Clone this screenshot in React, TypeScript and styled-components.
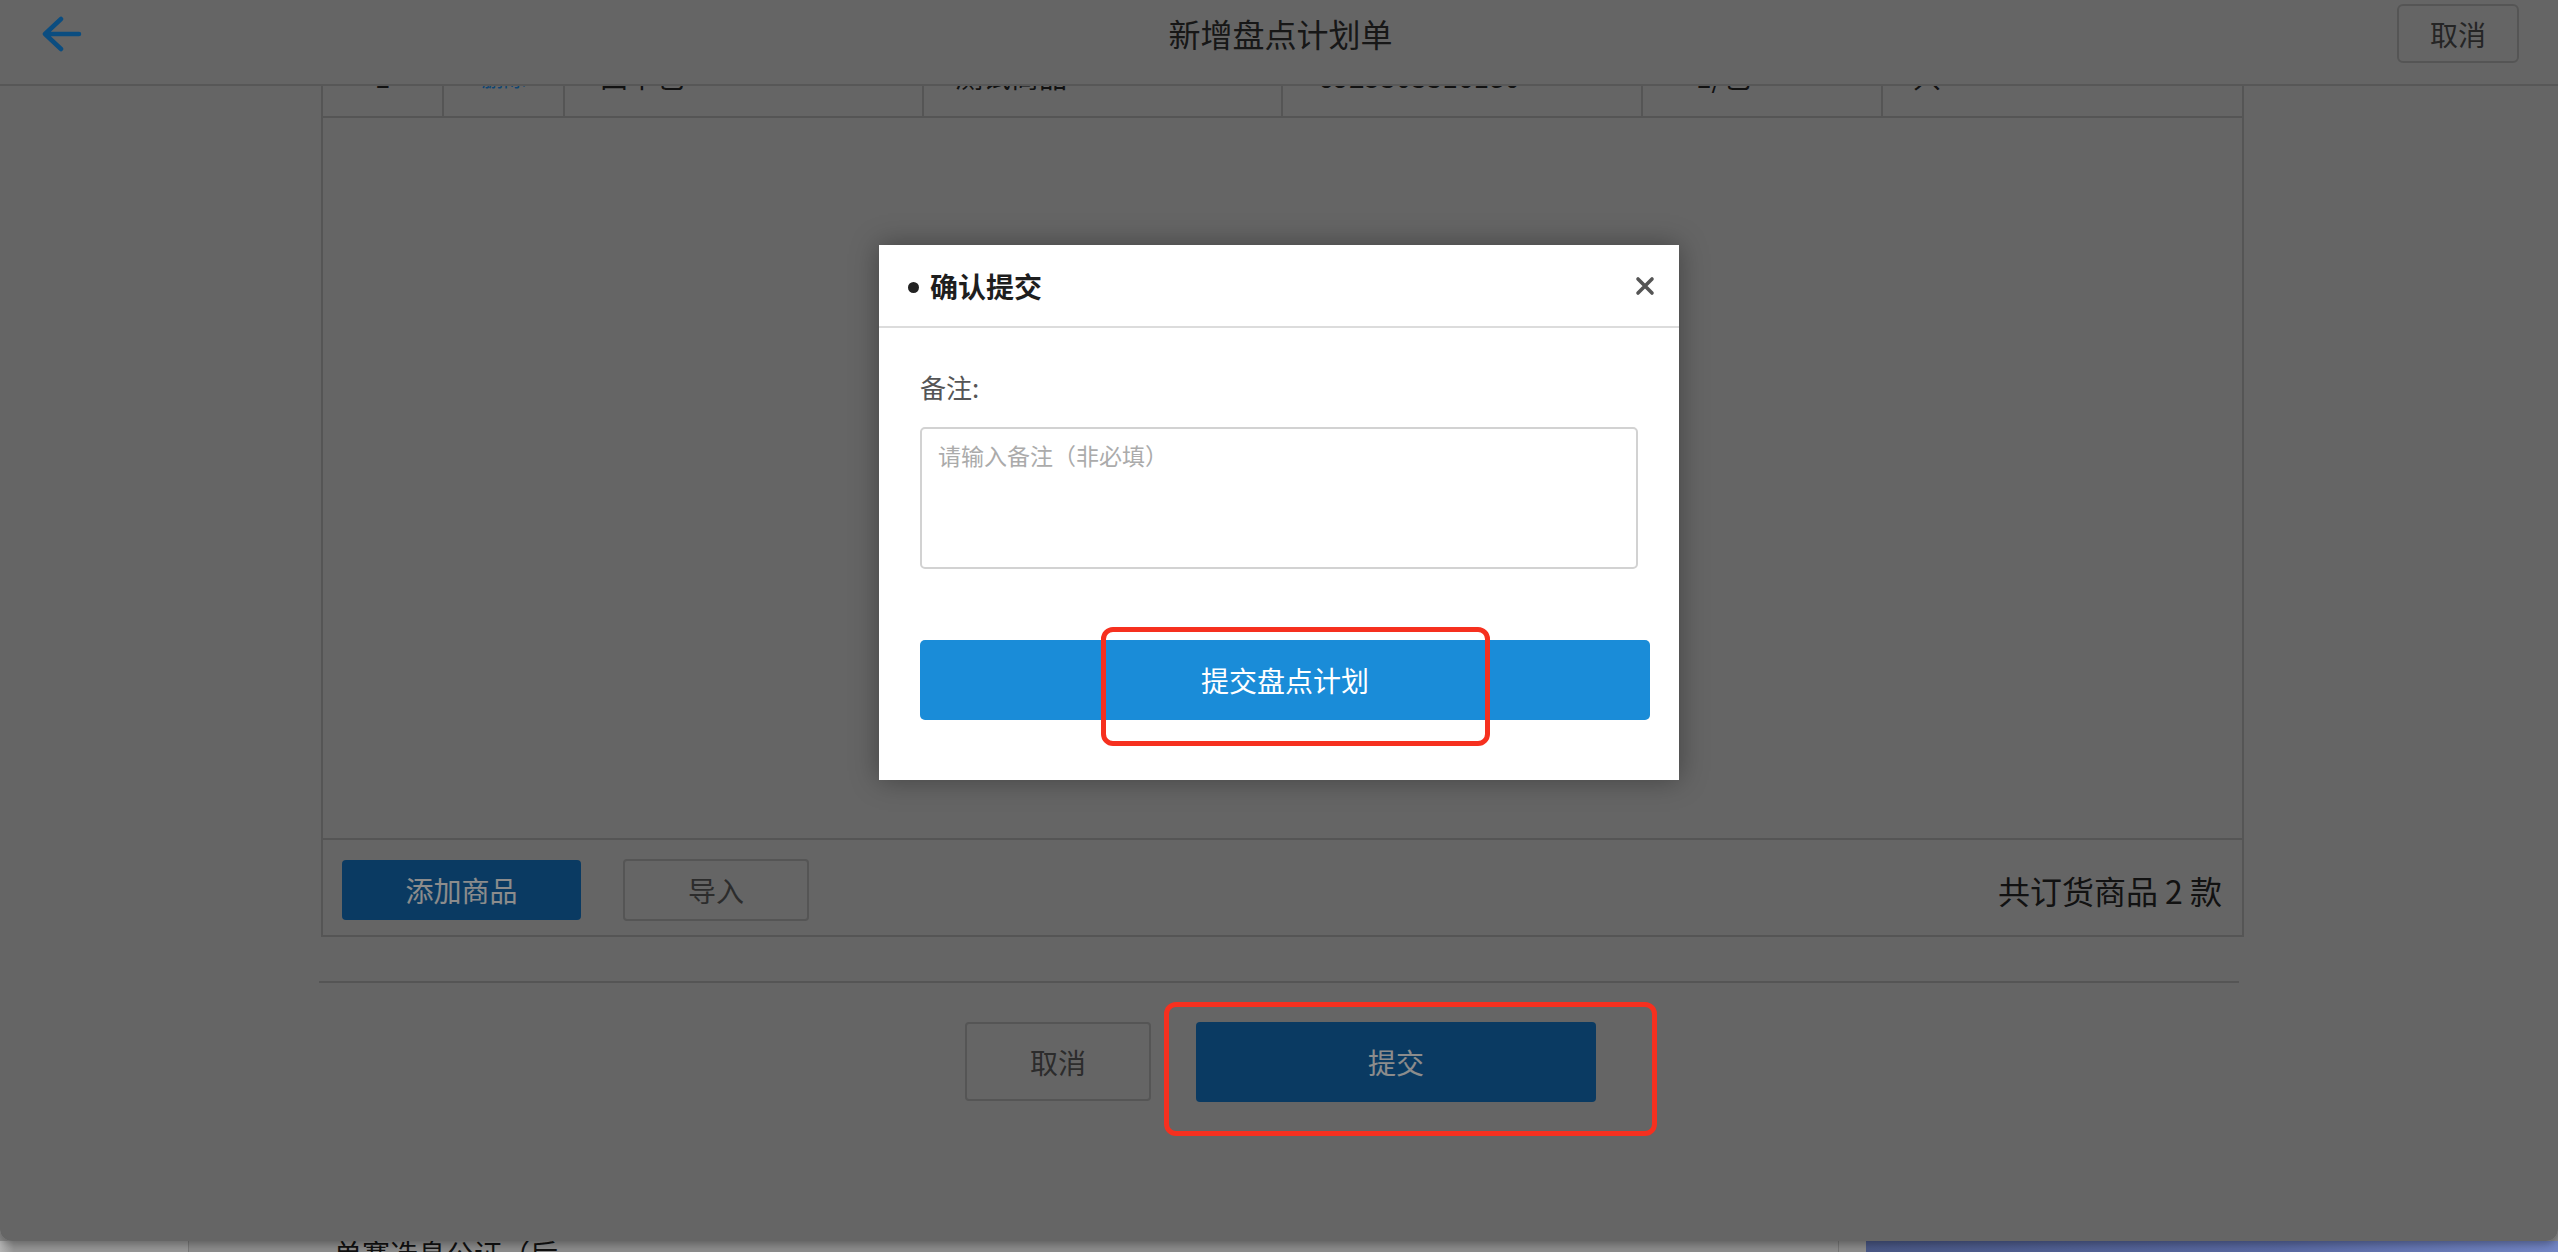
import React from "react";
import styled, { createGlobalStyle } from "styled-components";

const FONT = `"Noto Sans CJK SC", "Noto Sans", "Liberation Sans", sans-serif`;

const Global = createGlobalStyle`
  html, body { margin: 0; padding: 0; }
  body {
    width: 2558px;
    height: 1252px;
    overflow: hidden;
    background: #8d8d8d;
    font-family: ${FONT};
  }
  * { box-sizing: border-box; }
`;

const Desktop = styled.div`
  width: 2558px;
  height: 1252px;
  display: flex;
  flex-direction: column;
  background: #8d8d8d;
  overflow: hidden;
`;

const Window = styled.div`
  position: relative;
  flex: none;
  height: 1241px;
  background: #b8b8b8;
  border-radius: 0 0 12px 12px;
  overflow: hidden;
  box-shadow: 0 3px 10px rgba(0, 0, 0, 0.35);
  z-index: 2;
  display: flex;
  flex-direction: column;
`;

/* ---------- page header ---------- */
const Header = styled.header`
  flex: none;
  height: 86px;
  border-bottom: 2px solid #9e9e9e;
  display: grid;
  grid-template-columns: 1fr auto 1fr;
  align-items: start;
  padding: 4px 39px 0 42px;
`;

const BackButton = styled.button`
  justify-self: start;
  height: 59px;
  padding: 0;
  border: 0;
  background: none;
  display: flex;
  align-items: center;
  cursor: pointer;
`;

const PageTitle = styled.h1`
  margin: 0;
  height: 59px;
  line-height: 59px;
  font-size: 32px;
  font-weight: 400;
  color: #2a2a2a;
`;

const HeaderCancel = styled.button`
  justify-self: end;
  width: 122px;
  height: 59px;
  border: 2px solid #9b9b9b;
  border-radius: 6px;
  background: transparent;
  font-family: ${FONT};
  font-size: 28px;
  color: #444;
  padding: 0;
`;

/* ---------- page body ---------- */
const Body = styled.main`
  flex: 1;
  overflow: hidden;
`;

const Panel = styled.section`
  margin: -50px 0 0 321px;
  width: 1923px;
  border-left: 2px solid #9b9b9b;
  border-right: 2px solid #9b9b9b;
`;

const Row = styled.div`
  display: grid;
  grid-template-columns: 121px 121px 359px 359px 360px 240px 1fr;
  height: 82px;
  border-bottom: 2px solid #9b9b9b;
`;

const Cell = styled.div<{ $center?: boolean; $pad?: number; $link?: boolean }>`
  display: flex;
  align-items: center;
  justify-content: ${(p) => (p.$center ? "center" : "flex-start")};
  padding-left: ${(p) => (p.$center ? 0 : p.$pad ?? 34)}px;
  border-right: 2px solid #9b9b9b;
  font-size: ${(p) => (p.$link ? 22 : 28)}px;
  color: ${(p) => (p.$link ? "#1a7fd0" : "#222")};
  &:last-child { border-right: 0; }
`;

const EmptyArea = styled.div`
  height: 720px;
`;

const Footer = styled.div`
  height: 99px;
  border-top: 2px solid #9b9b9b;
  border-bottom: 2px solid #9b9b9b;
  display: flex;
  align-items: center;
  padding: 4px 20px 0 19px;
  gap: 42px;
`;

const PrimaryButton = styled.button<{ $w: number; $h: number }>`
  width: ${(p) => p.$w}px;
  height: ${(p) => p.$h}px;
  border: 0;
  border-radius: 4px;
  background: #136bb3;
  color: #ffffff;
  font-family: ${FONT};
  font-size: 28px;
  padding: 0;
`;

const GhostButton = styled.button<{ $w: number; $h: number }>`
  width: ${(p) => p.$w}px;
  height: ${(p) => p.$h}px;
  border: 2px solid #9b9b9b;
  border-radius: 4px;
  background: transparent;
  color: #505050;
  font-family: ${FONT};
  font-size: 28px;
  padding: 0;
`;

const Total = styled.div`
  margin-left: auto;
  font-size: 32px;
  color: #222;
`;

const Separator = styled.hr`
  margin: 44px 0 0 319px;
  width: 1920px;
  height: 2px;
  border: 0;
  background: #9b9b9b;
`;

const Actions = styled.div`
  margin-top: 39px;
  display: flex;
  justify-content: center;
  align-items: flex-start;
  gap: 45px;
  padding-left: 3px;
`;

/* ---------- modal ---------- */
const Backdrop = styled.div`
  position: absolute;
  inset: 0;
  background: rgba(0, 0, 0, 0.45);
  display: flex;
  justify-content: center;
  align-items: flex-start;
  padding-top: 245px;
`;

const Modal = styled.div`
  width: 800px;
  background: #ffffff;
  box-shadow: 0 0 26px rgba(0, 0, 0, 0.35);
`;

const ModalHeader = styled.div`
  height: 83px;
  border-bottom: 2px solid #dcdcdc;
  display: flex;
  align-items: center;
  padding: 0 24px 0 29px;
`;

const Dot = styled.span`
  width: 11px;
  height: 11px;
  border-radius: 50%;
  background: #222;
  margin: 3px 11px 0 0;
`;

const ModalTitle = styled.h2`
  margin: 0;
  font-size: 28px;
  font-weight: 700;
  color: #1e1e1e;
`;

const CloseButton = styled.button`
  margin-left: auto;
  border: 0;
  background: none;
  padding: 0;
  display: flex;
  cursor: pointer;
`;

const ModalBody = styled.div`
  padding: 43px 29px 60px 41px;
`;

const Label = styled.label`
  display: block;
  font-size: 26px;
  line-height: 31px;
  color: #555;
`;

const NoteInput = styled.textarea`
  display: block;
  margin-top: 25px;
  width: 718px;
  height: 142px;
  border: 2px solid #d2d2d2;
  border-radius: 5px;
  padding: 10px 16px;
  resize: none;
  font-family: ${FONT};
  font-size: 23px;
  line-height: 32px;
  color: #333;
  outline: none;
  &::placeholder { color: #ababab; }
`;

const SubmitPlan = styled.button`
  display: block;
  margin-top: 71px;
  width: 730px;
  height: 80px;
  border: 0;
  border-radius: 5px;
  background: #1a8cd8;
  color: #fff;
  font-family: ${FONT};
  font-size: 28px;
  padding: 0;
`;

/* ---------- annotation ---------- */
const Highlight = styled.div<{ $x: number; $y: number; $w: number; $h: number }>`
  position: absolute;
  left: ${(p) => p.$x}px;
  top: ${(p) => p.$y}px;
  width: ${(p) => p.$w}px;
  height: ${(p) => p.$h}px;
  border: 5px solid #f6301f;
  border-radius: 12px;
  pointer-events: none;
`;

/* ---------- behind window ---------- */
const Behind = styled.div`
  flex: 1;
  display: flex;
  overflow: hidden;
`;

const BehindSide = styled.div`
  width: 189px;
  background: linear-gradient(90deg, #b4b4b4 0, #979797 14px, #979797 100%);
  border-right: 1px solid #7a7a7a;
`;

const BehindMain = styled.div`
  width: 1649px;
  background: #8d8d8d;
  padding-left: 145px;
`;

const BehindText = styled.div`
  margin-top: -5px;
  font-size: 28px;
  line-height: 34px;
  color: #111;
`;

const BehindGap = styled.div`
  width: 28px;
  background: #8d8d8d;
  border-left: 1px solid #777;
`;

const BehindBlue = styled.div`
  flex: 1;
  background: linear-gradient(90deg, #4a5886 0%, #5a6aa4 60%, #7386c6 100%);
`;

const BackArrow = () => (
  <svg width="40" height="36" viewBox="0 0 40 36" fill="none">
    <path
      d="M19 3 L3 18 L19 33 M3 18 H37"
      stroke="#148ce9"
      strokeWidth="4.5"
      strokeLinecap="round"
      strokeLinejoin="round"
    />
  </svg>
);

const CloseIcon = () => (
  <svg width="20" height="20" viewBox="0 0 20 20" fill="none">
    <path d="M3 3 L17 17 M17 3 L3 17" stroke="#555" strokeWidth="3.6" strokeLinecap="round" />
  </svg>
);

export default function App() {
  return (
    <>
      <Global />
      <Desktop>
        <Window>
          <Header>
            <BackButton aria-label="返回">
              <BackArrow />
            </BackButton>
            <PageTitle>新增盘点计划单</PageTitle>
            <HeaderCancel>取消</HeaderCancel>
          </Header>
          <Body>
            <Panel>
              <Row>
                <Cell $center>1</Cell>
                <Cell $center $link>删除</Cell>
                <Cell $pad={35}>田中包</Cell>
                <Cell $pad={31}>测试商品</Cell>
                <Cell $pad={35}>6925303316180</Cell>
                <Cell $pad={53}>1/包</Cell>
                <Cell $pad={30}>只</Cell>
              </Row>
              <EmptyArea />
              <Footer>
                <PrimaryButton $w={239} $h={60}>添加商品</PrimaryButton>
                <GhostButton $w={186} $h={62}>导入</GhostButton>
                <Total>共订货商品 2 款</Total>
              </Footer>
            </Panel>
            <Separator />
            <Actions>
              <GhostButton $w={186} $h={79}>取消</GhostButton>
              <PrimaryButton $w={400} $h={80}>提交</PrimaryButton>
            </Actions>
          </Body>

          <Backdrop>
            <Modal role="dialog">
              <ModalHeader>
                <Dot />
                <ModalTitle>确认提交</ModalTitle>
                <CloseButton aria-label="关闭">
                  <CloseIcon />
                </CloseButton>
              </ModalHeader>
              <ModalBody>
                <Label>备注:</Label>
                <NoteInput placeholder="请输入备注（非必填）" />
                <SubmitPlan>提交盘点计划</SubmitPlan>
              </ModalBody>
            </Modal>
          </Backdrop>

          <Highlight $x={1101} $y={627} $w={389} $h={119} />
          <Highlight $x={1164} $y={1002} $w={493} $h={134} />
        </Window>
        <Behind>
          <BehindSide />
          <BehindMain>
            <BehindText>单赛选息公证（后</BehindText>
          </BehindMain>
          <BehindGap />
          <BehindBlue />
        </Behind>
      </Desktop>
    </>
  );
}
